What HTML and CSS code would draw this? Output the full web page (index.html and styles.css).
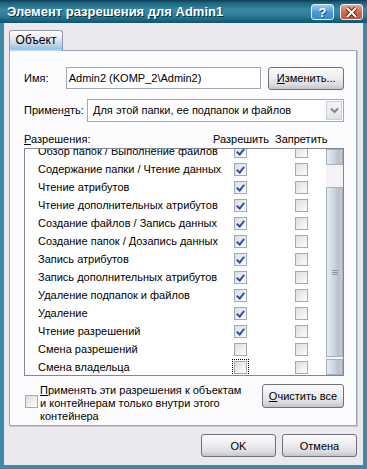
FILE: index.html
```html
<!DOCTYPE html>
<html lang="ru">
<head>
  <meta charset="UTF-8" />
  <title>Элемент разрешения для Admin1</title>
  <link rel="stylesheet" href="styles.css">
</head>
<body>
  <div class="window">
    <div class="titlebar">
      <div class="title">Элемент разрешения для Admin1</div>
      <div class="caption-btn help">?</div>
      <div class="caption-btn close">
        <svg width="13" height="11" viewBox="0 0 13 11"><path d="M2 1 L11 10 M11 1 L2 10" stroke="#5a2418" stroke-width="4"/><path d="M2 1 L11 10 M11 1 L2 10" stroke="#fff" stroke-width="2"/></svg>
      </div>
    </div>
    <div class="frame">
      <div class="tabs">
        <div class="tab">Объект</div>
      </div>
      <div class="panel">
        <div class="row">
          <div class="label name-label">Имя:</div>
          <div class="textbox">Admin2 (KOMP_2\Admin2)</div>
          <button class="btn change-btn"><u>И</u>зменить...</button>
        </div>
        <div class="row apply-row">
          <div class="label">Примен<u>я</u>ть:</div>
          <div class="combo">
            <span class="combo-text">Для этой папки, ее подпапок и файлов</span>
            <span class="combo-arrow">
              <svg width="9" height="7" viewBox="0 0 9 7"><path d="M1 1.5 L4.5 5 L8 1.5" fill="none" stroke="#7b8794" stroke-width="2"/></svg>
            </span>
          </div>
        </div>
        <div class="list-head">
          <span class="head-name"><u>Р</u>азрешения:</span>
          <span class="head-allow">Разрешить</span>
          <span class="head-deny">Запретить</span>
        </div>
        <div class="listbox">
          <div class="items">
            <div class="item"><span class="item-name">Обзор папок / Выполнение файлов</span><span class="cell"><span class="check on"></span></span><span class="cell"><span class="check"></span></span></div>
            <div class="item"><span class="item-name">Содержание папки / Чтение данных</span><span class="cell"><span class="check on"></span></span><span class="cell"><span class="check"></span></span></div>
            <div class="item"><span class="item-name">Чтение атрибутов</span><span class="cell"><span class="check on"></span></span><span class="cell"><span class="check"></span></span></div>
            <div class="item"><span class="item-name">Чтение дополнительных атрибутов</span><span class="cell"><span class="check on"></span></span><span class="cell"><span class="check"></span></span></div>
            <div class="item"><span class="item-name">Создание файлов / Запись данных</span><span class="cell"><span class="check on"></span></span><span class="cell"><span class="check"></span></span></div>
            <div class="item"><span class="item-name">Создание папок / Дозапись данных</span><span class="cell"><span class="check on"></span></span><span class="cell"><span class="check"></span></span></div>
            <div class="item"><span class="item-name">Запись атрибутов</span><span class="cell"><span class="check on"></span></span><span class="cell"><span class="check"></span></span></div>
            <div class="item"><span class="item-name">Запись дополнительных атрибутов</span><span class="cell"><span class="check on"></span></span><span class="cell"><span class="check"></span></span></div>
            <div class="item"><span class="item-name">Удаление подпапок и файлов</span><span class="cell"><span class="check on"></span></span><span class="cell"><span class="check"></span></span></div>
            <div class="item"><span class="item-name">Удаление</span><span class="cell"><span class="check on"></span></span><span class="cell"><span class="check"></span></span></div>
            <div class="item"><span class="item-name">Чтение разрешений</span><span class="cell"><span class="check on"></span></span><span class="cell"><span class="check"></span></span></div>
            <div class="item"><span class="item-name">Смена разрешений</span><span class="cell"><span class="check"></span></span><span class="cell"><span class="check"></span></span></div>
            <div class="item"><span class="item-name">Смена владельца</span><span class="cell"><span class="focus"><span class="check"></span></span></span><span class="cell"><span class="check"></span></span></div>
          </div>
          <div class="scrollbar">
            <div class="sb-btn"></div>
            <div class="sb-track"></div>
            <div class="sb-thumb"><span class="grip"></span></div>
            <div class="sb-btn down"></div>
          </div>
        </div>
        <div class="bottom-row">
          <span class="check inherit"></span>
          <div class="inherit-text"><u>П</u>рименять эти разрешения к объектам и контейнерам только внутри этого контейнера</div>
          <button class="btn clear-btn"><u>О</u>чистить все</button>
        </div>
      </div>
      <div class="actions">
        <button class="btn dlg-btn">OK</button>
        <button class="btn dlg-btn">Отмена</button>
      </div>
    </div>
  </div>
</body>
</html>
```

FILE: styles.css
```css
body, html {
  margin: 0;
  padding: 0;
  height: 100%;
  overflow: hidden;
  font-family: 'Liberation Sans', Arial, sans-serif;
  font-size: 11px;
  color: #000;
}
.window {
  width: 367px;
  height: 469px;
  display: flex;
  flex-direction: column;
}
.titlebar {
  height: 23px;
  display: flex;
  align-items: center;
  padding: 0 4px 0 7px;
  background: linear-gradient(#0b3d55 0, #1d6580 3px, #3a8aa6 10px, #2f7f9b 15px, #16607c 21px, #0f5570 23px);
}
.title {
  flex: 1;
  color: #fff;
  font-weight: bold;
  font-size: 13px;
  text-shadow: 1px 1px 0 #08303f;
}
.caption-btn {
  width: 21px;
  height: 14px;
  border: 1px solid #e8f0f4;
  border-radius: 3px;
  display: flex;
  align-items: center;
  justify-content: center;
  margin-top: 1px;
}
.help {
  margin-right: 6px;
  background: linear-gradient(#9ccdf0, #4b97d4 55%, #3d86c4);
  color: #fff;
  font-weight: bold;
  font-size: 13px;
  text-shadow: 1px 1px 0 #1a4670;
}
.close {
  background: linear-gradient(#eda48c, #d5684c 55%, #c55538);
}
.frame {
  flex: 1;
  display: flex;
  flex-direction: column;
  background: #ece9ee;
  border: 4px solid #3d8ba7;
  border-top: none;
  padding: 0 6px 0 5px;
}
.tabs {
  display: flex;
  margin-top: 7px;
  position: relative;
  z-index: 1;
}
.tab {
  width: 52px;
  height: 20px;
  line-height: 19px;
  text-align: center;
  font-size: 12px;
  border: 1px solid #8f9cb0;
  border-bottom: none;
  border-radius: 3px 3px 0 0;
  background: linear-gradient(#ffffff, #e6e8ee 40%, #c9d0dc 70%, #8fc4ec 88%, #c0dcf2);
}
.panel {
  height: 376px;
  margin-top: -1px;
  border: 1px solid #9aa5b4;
  background: #fcfcfe;
  padding: 16px 12px 0 14px;
  box-sizing: border-box;
  box-shadow: 1px 1px 0 #c9c6cf;
}
.row {
  display: flex;
  align-items: center;
  height: 22px;
}
.apply-row {
  margin-top: 10px;
}
.label {
  width: 63px;
}
.name-label {
  width: 42px;
}
.textbox {
  width: 193px;
  height: 20px;
  line-height: 20px;
  border: 1px solid #a0a8b4;
  padding-left: 2px;
  background: #fff;
}
.btn {
  font-family: inherit;
  font-size: 11px;
  color: #000;
  border: 1px solid #6f7278;
  border-radius: 3px;
  background: linear-gradient(#fbfbfb, #eeeef0 45%, #dcdce0 80%, #c4c4ca);
  padding: 0;
}
.change-btn {
  width: 76px;
  height: 23px;
  margin-left: 7px;
}
.combo {
  width: 255px;
  height: 21px;
  border: 1px solid #a0a8b4;
  background: #fff;
  display: flex;
  align-items: center;
}
.combo-text {
  flex: 1;
  padding-left: 5px;
}
.combo-arrow {
  width: 16px;
  height: 19px;
  margin-right: 1px;
  border: 1px solid #c7ced6;
  box-sizing: border-box;
  background: linear-gradient(#f4f6f9, #dde3ea);
  display: flex;
  align-items: center;
  justify-content: center;
}
.list-head {
  display: flex;
  margin-top: 12px;
  height: 15px;
}
.head-name {
  width: 189px;
}
.head-allow {
  width: 62px;
}
.listbox {
  height: 226px;
  border: 1px solid #828790;
  background: #fff;
  display: flex;
  overflow: hidden;
}
.items {
  flex: 1;
  min-width: 0;
  margin-top: -7px;
}
.item {
  height: 18px;
  display: flex;
  align-items: center;
}
.item-name {
  flex: none;
  width: 196px;
  padding-left: 13px;
  white-space: nowrap;
  overflow: hidden;
}
.cell {
  flex: none;
  width: 61px;
  display: flex;
}
.check {
  width: 11px;
  height: 11px;
  border: 1px solid #a4a9b0;
  background: linear-gradient(135deg, #dcdde0, #f4f4f6 70%, #fff);
  display: inline-block;
  position: relative;
}
.check.on::after {
  content: '';
  position: absolute;
  left: 3px;
  top: 1px;
  width: 3px;
  height: 6px;
  border: solid #3151a8;
  border-width: 0 2px 2px 0;
  transform: rotate(40deg);
}
.focus {
  outline: 1px dotted #000;
  outline-offset: 1px;
  display: flex;
}
.scrollbar {
  flex: none;
  width: 17px;
  display: flex;
  flex-direction: column;
  background: #f3f3f6;
}
.sb-btn, .sb-thumb {
  border: 1px solid #a8b0ba;
  background: linear-gradient(to right, #e6edf3, #ccd8e4 45%, #b9c1cc 75%, #c6ccd4);
  box-sizing: border-box;
}
.sb-btn {
  height: 16px;
}
.sb-btn.down {
  margin-top: 2px;
}
.sb-track {
  height: 22px;
}
.sb-thumb {
  flex: 1;
  display: flex;
  align-items: center;
  justify-content: center;
}
.grip {
  width: 6px;
  height: 5px;
  background: repeating-linear-gradient(#8a96a4 0, #8a96a4 1px, transparent 1px, transparent 2px);
}
.bottom-row {
  display: flex;
  margin-top: 8px;
}
.check.inherit {
  margin: 11px 0 0 1px;
  flex: none;
}
.inherit-text {
  width: 210px;
  margin-left: 2px;
  line-height: 13px;
}
.clear-btn {
  width: 82px;
  height: 24px;
  margin-left: auto;
}
.actions {
  display: flex;
  justify-content: flex-end;
  gap: 6px;
  margin-top: 8px;
}
.dlg-btn {
  width: 75px;
  height: 23px;
}
```
